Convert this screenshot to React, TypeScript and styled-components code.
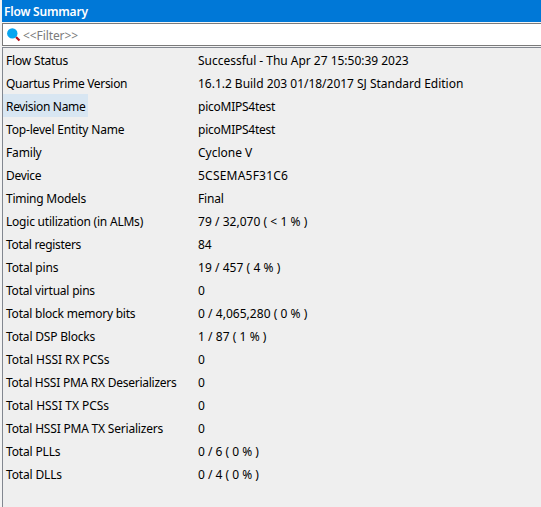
import React from "react";
import styled, { createGlobalStyle } from "styled-components";

const GlobalStyle = createGlobalStyle`
  * { box-sizing: border-box; }
  body { margin: 0; background: #efefef; overflow: hidden; }
`;

const Panel = styled.main`
  display: flex;
  flex-direction: column;
  width: 541px;
  height: 507px;
  padding-left: 2px;
  background: #f3f3f3;
  color: #000;
  font: 12px/25px "Noto Sans", sans-serif;
`;

const TitleBar = styled.header`
  height: 22px;
  flex: none;
  padding-left: 2px;
  background: #0078d7;
  color: #fff;
  font-size: 12px;
  font-weight: 600;
  letter-spacing: -0.2px;
  line-height: 24px;
`;

const FilterBar = styled.label`
  display: flex;
  align-items: center;
  flex: none;
  height: 23px;
  margin: 1px 0;
  padding-left: 4px;
  border: 1px solid #7a7a7a;
  border-right: 0;
  background: #fff;
`;

const FilterInput = styled.input`
  flex: 1;
  height: 20px;
  margin-left: 1px;
  padding: 2px 0 0;
  border: 0;
  outline: 0;
  background: transparent;
  font: 12px "Noto Sans", sans-serif;
  letter-spacing: -0.1px;
  &::placeholder { color: #7b7b7b; opacity: 1; }
`;

const Report = styled.section`
  flex: 1;
  min-height: 0;
  border-left: 1px solid #828790;
  border-top: 1px solid #828790;
  background: #efefef;
`;

const Row = styled.div`
  display: grid;
  grid-template-columns: 192px 1fr;
  height: 23px;
  white-space: pre;
`;

const Label = styled.span<{ $selected?: boolean; $tracking?: number }>`
  justify-self: start;
  height: 23px;
  padding: 0 3px;
  background: ${(p) => (p.$selected ? "#d8e6f2" : "transparent")};
  letter-spacing: ${(p) => p.$tracking ?? 0}px;
`;

const Value = styled.span<{ $tracking?: number }>`
  justify-self: start;
  height: 23px;
  padding-left: 3px;
  letter-spacing: ${(p) => p.$tracking ?? 0}px;
`;

type Entry = { label: string; value: string; lt?: number; vt?: number; selected?: boolean };

const entries: Entry[] = [
  { label: "Flow Status", value: "Successful - Thu Apr 27 15:50:39 2023", lt: -0.18, vt: -0.02 },
  { label: "Quartus Prime Version", value: "16.1.2 Build 203 01/18/2017 SJ Standard Edition", lt: -0.31, vt: -0.02 },
  { label: "Revision Name", value: "picoMIPS4test", selected: true, lt: -0.33, vt: -0.25 },
  { label: "Top-level Entity Name", value: "picoMIPS4test", lt: -0.17, vt: -0.25 },
  { label: "Family", value: "Cyclone V", lt: -0.15 },
  { label: "Device", value: "5CSEMA5F31C6", lt: -0.3, vt: 0.22 },
  { label: "Timing Models", value: "Final", lt: -0.25, vt: -0.2 },
  { label: "Logic utilization (in ALMs)", value: "79 / 32,070 ( < 1 % )", lt: -0.22, vt: 0.04 },
  { label: "Total registers", value: "84", lt: -0.33 },
  { label: "Total pins", value: "19 / 457 ( 4 % )", lt: -0.17, vt: 0.05 },
  { label: "Total virtual pins", value: "0", lt: -0.22 },
  { label: "Total block memory bits", value: "0 / 4,065,280 ( 0 % )", lt: -0.23, vt: 0.04 },
  { label: "Total DSP Blocks", value: "1 / 87 ( 1 % )", lt: -0.19, vt: 0.05 },
  { label: "Total HSSI RX PCSs", value: "0", lt: -0.05 },
  { label: "Total HSSI PMA RX Deserializers", value: "0", lt: -0.25 },
  { label: "Total HSSI TX PCSs", value: "0", lt: -0.03 },
  { label: "Total HSSI PMA TX Serializers", value: "0", lt: -0.2 },
  { label: "Total PLLs", value: "0 / 6 ( 0 % )", lt: -0.15 },
  { label: "Total DLLs", value: "0 / 4 ( 0 % )", lt: -0.15 },
];

const SearchIcon = () => (
  <svg width="15" height="15" viewBox="0 0 15 15" aria-hidden="true">
    <path d="M9 10L12.5 13.5" stroke="#b5121b" strokeWidth="2.2" />
    <circle cx="5.3" cy="6.4" r="5.2" fill="#08a5f0" />
  </svg>
);

export default function App() {
  return (
    <>
      <GlobalStyle />
      <Panel>
        <TitleBar>Flow Summary</TitleBar>
        <FilterBar>
          <SearchIcon />
          <FilterInput placeholder="<<Filter>>" />
        </FilterBar>
        <Report>
          {entries.map((e) => (
            <Row key={e.label}>
              <Label $selected={e.selected} $tracking={e.lt}>{e.label}</Label>
              <Value $tracking={e.vt}>{e.value}</Value>
            </Row>
          ))}
        </Report>
      </Panel>
    </>
  );
}
